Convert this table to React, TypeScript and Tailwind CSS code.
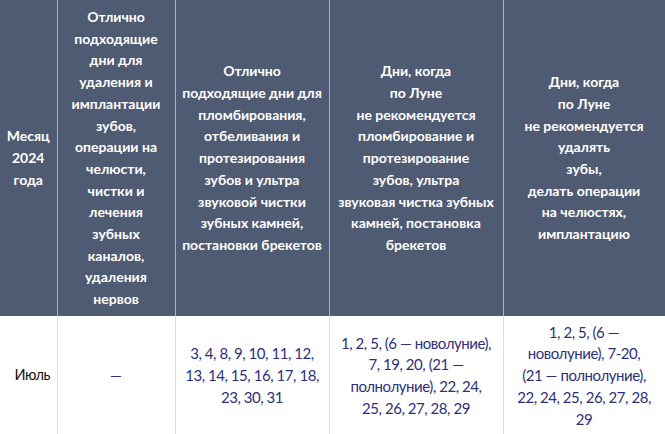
const head = [
  ['Месяц', '2024', 'года'],
  [
    'Отлично',
    'подходящие',
    'дни для',
    'удаления и',
    'имплантации',
    'зубов,',
    'операции на',
    'челюсти,',
    'чистки и',
    'лечения',
    'зубных',
    'каналов,',
    'удаления',
    'нервов',
  ],
  [
    'Отлично',
    'подходящие дни для',
    'пломбирования,',
    'отбеливания и',
    'протезирования',
    'зубов и ультра',
    'звуковой чистки',
    'зубных камней,',
    'постановки брекетов',
  ],
  [
    'Дни, когда',
    'по Луне',
    'не рекомендуется',
    'пломбирование и',
    'протезирование',
    'зубов, ультра',
    'звуковая чистка зубных',
    'камней, постановка',
    'брекетов',
  ],
  [
    'Дни, когда',
    'по Луне',
    'не рекомендуется',
    'удалять',
    'зубы,',
    'делать операции',
    'на челюстях,',
    'имплантацию',
  ],
]

const body = [
  ['3, 4, 8, 9, 10, 11, 12,', '13, 14, 15, 16, 17, 18,', '23, 30, 31'],
  ['1, 2, 5, (6 — новолуние),', '7, 19, 20, (21 —', 'полнолуние), 22, 24,', '25, 26, 27, 28, 29'],
  ['1, 2, 5, (6 —', 'новолуние), 7-20,', '(21 — полнолуние),', '22, 24, 25, 26, 27, 28,', '29'],
]

function Lines({ lines }: { lines: string[] }) {
  return (
    <>
      {lines.map((l, i) => (
        <div key={i} className="whitespace-nowrap">
          {l}
        </div>
      ))}
    </>
  )
}

export default function App() {
  return (
    <div className="w-[665px] h-[434px] overflow-hidden bg-white" style={{ fontFamily: 'Lato, "Noto Sans", sans-serif' }}>
      <table className="w-[665px] table-fixed border-collapse">
        <colgroup>
          <col className="w-[57px]" />
          <col className="w-[118px]" />
          <col className="w-[154px]" />
          <col className="w-[174px]" />
          <col className="w-[162px]" />
        </colgroup>
        <thead>
          <tr className="h-[316px] bg-[#4f5b72]">
            {head.map((lines, i) => (
              <th
                key={i}
                className={
                  i === 1
                    ? 'border-r border-[#a9b1c2] pt-[6px] align-top text-center text-[14px] leading-[21.7px] font-bold text-white'
                    : 'border-r border-[#a9b1c2] align-middle text-center text-[14px] leading-[21.7px] font-bold text-white'
                }
              >
                <Lines lines={lines} />
              </th>
            ))}
          </tr>
        </thead>
        <tbody>
          <tr className="h-[118px]">
            <td className="border-r border-[#dcdcdc] pl-2 align-middle text-center text-[14.5px] tracking-[-0.5px] text-[#111]">Июль</td>
            <td className="border-r border-[#dcdcdc] align-middle text-center text-[15px] text-[#2e2f7a]">—</td>
            {body.map((lines, i) => (
              <td
                key={i}
                className="border-r border-[#dcdcdc] pt-[2px] align-middle text-center text-[15px] leading-[21.7px] tracking-[-0.45px] text-[#2e2f7a]"
              >
                <Lines lines={lines} />
              </td>
            ))}
          </tr>
        </tbody>
      </table>
    </div>
  )
}
